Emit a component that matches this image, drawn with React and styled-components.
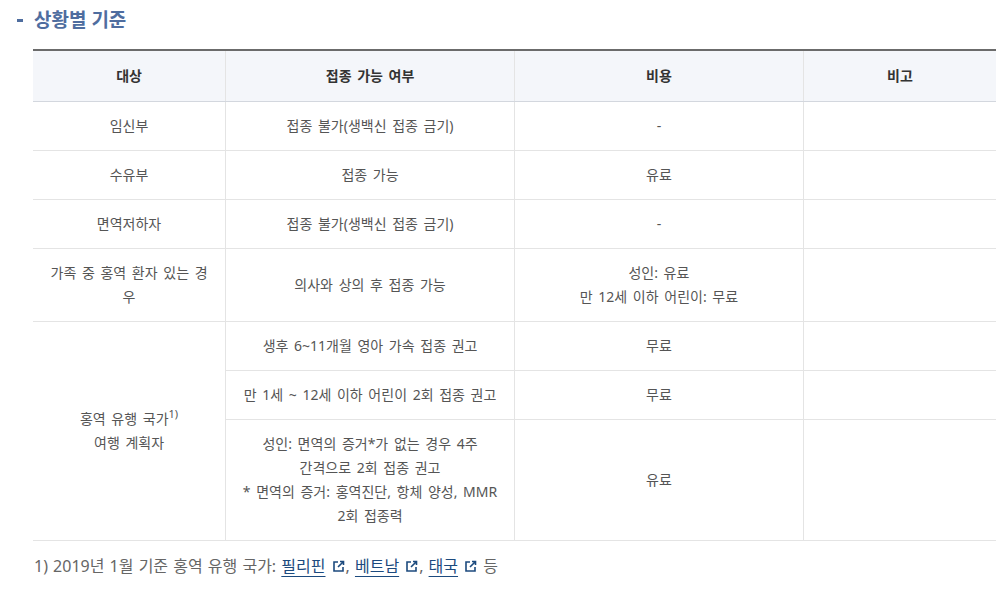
import React from 'react';
import styled, { createGlobalStyle } from 'styled-components';

const GlobalStyle = createGlobalStyle`
  body {
    margin: 0;
    background: #fff;
    font-family: "Noto Sans", "Noto Sans CJK KR", sans-serif;
  }
`;

const Page = styled.div`
  padding: 6px 9px 20px 33px;
`;

const Heading = styled.h3`
  position: relative;
  margin: 0 0 15px;
  padding-left: 1px;
  font-size: 19px;
  line-height: 28px;
  font-weight: 700;
  color: #4f6d9f;
  &::before {
    content: '';
    position: absolute;
    left: -16px;
    top: 13px;
    width: 6px;
    height: 3px;
    background: #4f6d9f;
  }
`;

const Table = styled.table`
  width: 100%;
  table-layout: fixed;
  border-collapse: collapse;
  border-top: 2px solid #6b6b6b;
  font-size: 14px;
  word-spacing: 2px;
  color: #555;
`;

const Th = styled.th`
  height: 48px;
  padding: 0 0 2px;
  background: #f4f6fa;
  border-bottom: 1px solid #d3d7de;
  border-left: 1px solid #e4e4e4;
  font-weight: 700;
  color: #333;
  &:first-child {
    border-left: none;
  }
`;

const Td = styled.td`
  padding: 12px 14px;
  line-height: 24px;
  text-align: center;
  vertical-align: middle;
  word-break: break-all;
  border-bottom: 1px solid #e4e4e4;
  border-left: ${(p) => (p.$first ? 'none' : '1px solid #e4e4e4')};
`;

const Sup = styled.sup`
  font-size: 11px;
  line-height: 0;
`;

const Note = styled.p`
  margin: 12px 0 0 1px;
  font-size: 16px;
  word-spacing: 1px;
  color: #666;
`;

const Link = styled.a`
  color: #1c4a7e;
  text-decoration: underline;
  text-underline-offset: 4px;
`;

const ExtIcon = styled.svg`
  width: 13px;
  height: 13px;
  margin: 0 1px 0 6px;
  vertical-align: -1px;
`;

const Ext = () => (
  <ExtIcon viewBox="0 0 13 13">
    <path d="M6 2H2v9h9V7" fill="none" stroke="#1c4a7e" strokeWidth="1.6" />
    <path d="M8 1.5h3.5V5M11.5 1.5L6 7" fill="none" stroke="#1c4a7e" strokeWidth="1.6" />
  </ExtIcon>
);

const rows = [
  ['임신부', '접종 불가(생백신 접종 금기)', '-'],
  ['수유부', '접종 가능', '유료'],
  ['면역저하자', '접종 불가(생백신 접종 금기)', '-'],
  [
    '가족 중 홍역 환자 있는 경우',
    '의사와 상의 후 접종 가능',
    <>
      성인: 유료
      <br />
      만 12세 이하 어린이: 무료
    </>,
  ],
];

const travel = [
  ['생후 6~11개월 영아 가속 접종 권고', '무료'],
  ['만 1세 ~ 12세 이하 어린이 2회 접종 권고', '무료'],
  [
    <>
      성인: 면역의 증거*가 없는 경우 4주
      <br />
      간격으로 2회 접종 권고
      <br />
      * 면역의 증거: 홍역진단, 항체 양성, MMR
      <br />
      2회 접종력
    </>,
    '유료',
  ],
];

export default function App() {
  return (
    <Page>
      <GlobalStyle />
      <Heading>상황별 기준</Heading>
      <Table>
        <colgroup>
          <col style={{ width: '20%' }} />
          <col style={{ width: '30%' }} />
          <col style={{ width: '30%' }} />
          <col style={{ width: '20%' }} />
        </colgroup>
        <thead>
          <tr>
            <Th>대상</Th>
            <Th>접종 가능 여부</Th>
            <Th>비용</Th>
            <Th>비고</Th>
          </tr>
        </thead>
        <tbody>
          {rows.map((r, i) => (
            <tr key={i}>
              <Td $first>{r[0]}</Td>
              <Td>{r[1]}</Td>
              <Td>{r[2]}</Td>
              <Td />
            </tr>
          ))}
          {travel.map((r, i) => (
            <tr key={'t' + i}>
              {i === 0 && (
                <Td $first rowSpan={3}>
                  홍역 유행 국가<Sup>1)</Sup>
                  <br />
                  여행 계획자
                </Td>
              )}
              <Td>{r[0]}</Td>
              <Td>{r[1]}</Td>
              <Td />
            </tr>
          ))}
        </tbody>
      </Table>
      <Note>
        1) 2019년 1월 기준 홍역 유행 국가: <Link href="#">필리핀</Link>
        <Ext />, <Link href="#">베트남</Link>
        <Ext />, <Link href="#">태국</Link>
        <Ext /> 등
      </Note>
    </Page>
  );
}
